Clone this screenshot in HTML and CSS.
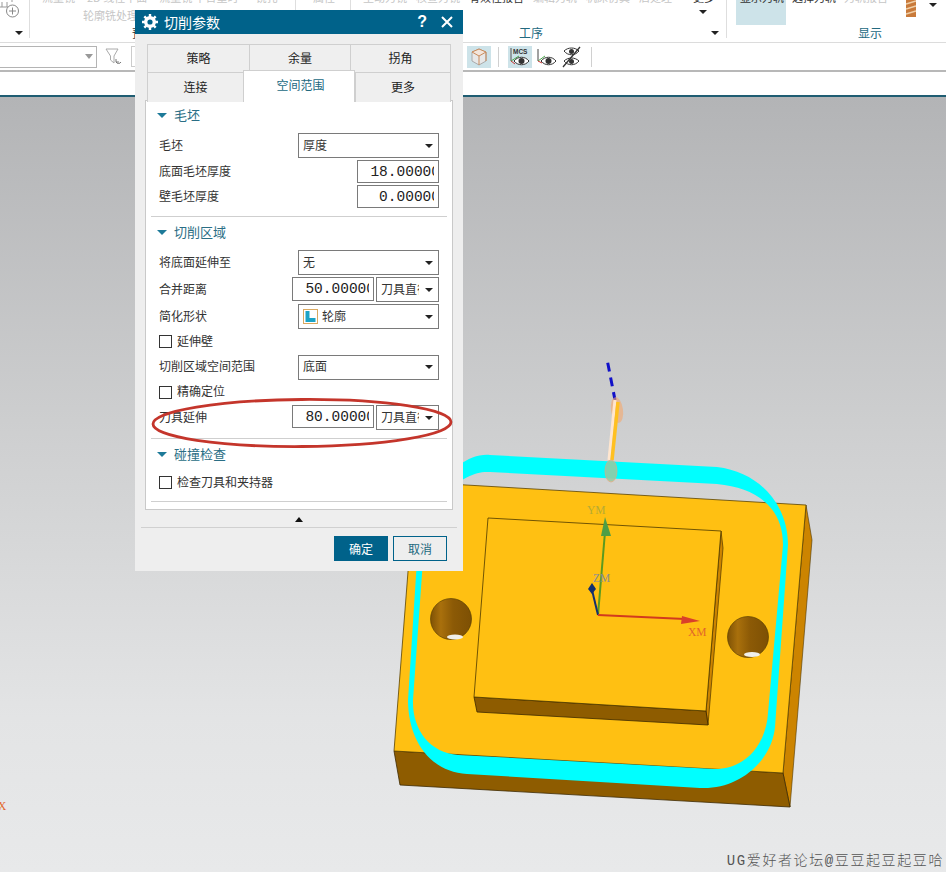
FILE: index.html
```html
<!DOCTYPE html>
<html lang="zh">
<head>
<meta charset="utf-8">
<title>切削参数</title>
<link rel="stylesheet" href="styles.css">
</head>
<body>
<div class="app">
  <header class="ribbon">
    <section class="g g1">
      <svg class="addicon" width="22" height="18" viewBox="0 0 22 18"><path d="M0 7h8M2 2v5M7 2v5M12 0v2" fill="none" stroke="#999"/><circle cx="12.5" cy="11" r="6" fill="#fff" stroke="#888"/><path d="M9 11h7M12.5 7.500v7" stroke="#888"/></svg>
      <i class="caret g1caret"></i>
    </section>
    <section class="g g2">
      <div class="rtop"><span>流量铣</span><span>2D 线性平面</span><span>流量铣 平台重时</span><span class="far">铣孔</span></div>
      <div class="rsub">轮廓铣处理器</div>
      <div class="glabel g2label">预</div>
    </section>
    <section class="g g3">
      <div class="rtop"><span>属性</span></div>
    </section>
    <section class="g g4">
      <div class="rtop"><span>主动力铣</span><span>核查力铣</span><span class="dark">有效性报告</span><span>编辑力轨</span><span>机床仿真</span><span>后处理</span><span class="dark more">更多</span></div>
      <i class="caret c4a"></i>
      <div class="glabel g4label">工序</div>
      <i class="caret c4b"></i>
    </section>
    <section class="g g5">
      <div class="hl"></div>
      <div class="rtop"><span class="dark">显示刀轨</span><span class="dark">选择刀轨</span><span>力轨报告</span></div>
      <svg class="drill" width="10" height="17" viewBox="0 0 10 17"><rect width="10" height="17" fill="#c97a3a"/><path d="M0 4l10-3M0 9l10-3M0 14l10-3" stroke="#f0d0a8" stroke-width="1.500"/></svg>
      <i class="caret c5"></i>
      <div class="glabel g5label">显示</div>
    </section>
  </header>

  <nav class="toolbar">
    <div class="combo"><i class="caret greycaret"></i></div>
    <svg class="filter" width="17" height="17" viewBox="0 0 17 17"><path d="M1 1h12L9 8v7L5.500 12V8z" fill="#fff" stroke="#aaa"/><path d="M16 14c-1 2-4 2-5 0M11 11v3h3" fill="none" stroke="#777"/></svg>
    <div class="mini"></div>
    <div class="tb-right">
      <div class="tbtn on"><svg width="18" height="18" viewBox="0 0 18 18"><path d="M9 1l7 3v9l-7 4-7-4V4z" fill="#e8e8e8" stroke="#aaa"/><path d="M9 1l7 3-7 4-7-4z" fill="#f3e6dc" stroke="#c98a5a"/><path d="M9 8v9M16 4v9" stroke="#c98a5a" fill="none"/></svg></div>
      <b class="tsep"></b>
      <div class="tbtn on mcs"><svg width="22" height="22" viewBox="0 0 22 22"><text x="4" y="8" class="mcs-t">MCS</text><path d="M2 2v13" stroke="#555"/><path d="M2 15l8-5" stroke="#4aa84a"/><path d="M2 15l4 3" stroke="#c33"/><path d="M5 15c4-5 11-5 15 0c-4 5-11 5-15 0z" fill="#fff" stroke="#333"/><circle cx="12.500" cy="15" r="3" fill="#333"/></svg></div>
      <div class="tbtn"><svg width="22" height="22" viewBox="0 0 22 22"><path d="M3 3v12" stroke="#444"/><path d="M3 15l7-5" stroke="#4aa84a"/><path d="M3 15l4 2" stroke="#c33"/><path d="M6 15c4-5 11-5 15 0c-4 5-11 5-15 0z" fill="#fff" stroke="#333"/><circle cx="13.500" cy="15" r="3" fill="#333"/></svg></div>
      <div class="tbtn"><svg width="22" height="22" viewBox="0 0 22 22"><path d="M3 5c4-4 11-4 15 0c-4 5-11 5-15 0z" fill="#fff" stroke="#333"/><circle cx="10.500" cy="5.500" r="2.500" fill="#333"/><path d="M3 15c4-4 11-4 15 0c-4 5-11 5-15 0z" fill="#fff" stroke="#333"/><circle cx="10.500" cy="15.500" r="2.500" fill="#333"/><path d="M2 21L19 1" stroke="#333" stroke-width="1.300"/></svg></div>
      <b class="tsep"></b>
    </div>
  </nav>

  <div class="gap"></div>

  <main class="viewport">
    <svg class="scene" viewBox="0 97 946 775" width="946" height="775">
      <defs>
        <linearGradient id="hole" x1="0" x2="1" y1="0" y2="0">
          <stop offset="0" stop-color="#7f5205"/><stop offset=".25" stop-color="#a9700c"/><stop offset=".55" stop-color="#8c5a06"/><stop offset="1" stop-color="#7d5004"/>
        </linearGradient>
      </defs>
      <path d="M806 505L812 540L790 807L783 773z" fill="#cc8400" stroke="#4d3500" stroke-width=".6"/>
      <path d="M394 751L783 773L790 807L400 785z" fill="#8e5c00" stroke="#3d2a00" stroke-width=".8"/>
      <path d="M415 482L806 505L783 773L394 751z" fill="#ffc012" stroke="#5a4300" stroke-width=".8"/>
      <path d="M721 531L723 548L708 725L706 711z" fill="#cc8400" stroke="#4d3500" stroke-width=".7"/>
      <path d="M474 697L706 711L708 725L477 712z" fill="#8e5c00" stroke="#3d2a00" stroke-width=".8"/>
      <path d="M488 518L721 531L706 711L474 697z" fill="#ffc012" stroke="#4d3900" stroke-width=".8"/>
      <g>
        <circle cx="451" cy="619" r="20.500" fill="url(#hole)" stroke="#4d3500" stroke-width=".6"/>
        <ellipse cx="455" cy="637" rx="8" ry="2.600" fill="#f0efea"/>
        <circle cx="748" cy="637" r="20.500" fill="url(#hole)" stroke="#4d3500" stroke-width=".6"/>
        <ellipse cx="752" cy="654.500" rx="8" ry="2.600" fill="#f0efea"/>
      </g>
      <path fill-rule="evenodd" fill="#00ffff" d="M417 560L408 700C408 740 430 772 467 774L700 788C740 790 772 760 775 727L788 545C788 505 760 472 717 467L490 455C470 453 450 470 430 490zM423 560L413 700C412 730 430 753 458 755L713 769C745 770 766 745 768 713L783 545C783 510 760 488 717 484L490 472C475 471 465 477 440 495z"/>
      <path d="M607.700 362.700L615 400" stroke="#1010c8" stroke-width="3" stroke-dasharray="9 6" fill="none"/>
      <ellipse cx="617" cy="410" rx="6" ry="13" fill="#f5a86e" opacity=".6" transform="rotate(-8 617 410)"/>
      <path d="M615 400L609 460" stroke="#ffe6cf" stroke-width="3"/>
      <path d="M618 402L612 460" stroke="#ffc020" stroke-width="3.500"/>
      <ellipse cx="611" cy="471" rx="6" ry="11" fill="#9ac8a0" stroke="#e8a878" stroke-width=".8" opacity=".85"/>
      <path d="M598 615L605 532" stroke="#5a9a20" stroke-width="2"/>
      <path d="M605 517L611 536L607 536L601 536z" fill="#4f9e45"/>
      <path d="M598 615L592 590" stroke="#14306e" stroke-width="2"/>
      <path d="M592 583L596 589L592 594L588 589z" fill="#14306e"/>
      <path d="M598 615L685 619" stroke="#d23a1e" stroke-width="2"/>
      <path d="M700 621L681 624L682 616z" fill="#d9402a"/>
      <text x="587" y="514" class="axis ym">YM</text>
      <text x="593" y="582" class="axis zm">ZM</text>
      <text x="688" y="636" class="axis xm">XM</text>
      <text x="-2" y="810" class="axis xm">X</text>
    </svg>
    <div class="wm">UG爱好者论坛@豆豆起豆起豆哈</div>
  </main>
</div>

<div class="dialog">
  <div class="dtitle">
    <svg class="gear" width="16" height="16" viewBox="0 0 16 16"><circle cx="8" cy="8" r="4.300" fill="none" stroke="#fff" stroke-width="3.400"/><path d="M8 0v3M8 13v3M0 8h3M13 8h3M2.300 2.300l2 2M11.700 11.700l2 2M13.700 2.300l-2 2M4.300 11.700l-2 2" stroke="#fff" stroke-width="2.400"/></svg>
    <span class="dname">切削参数</span>
    <span class="dq">?</span>
    <svg class="dx" width="12" height="12" viewBox="0 0 12 12"><path d="M1 1l10 10M11 1L1 11" stroke="#fff" stroke-width="2"/></svg>
  </div>
  <div class="dbody">
    <div class="tabs r1"><div class="tab">策略</div><div class="tab">余量</div><div class="tab">拐角</div></div>
    <div class="tabs r2"><div class="tab">连接</div><div class="tab active">空间范围</div><div class="tab">更多</div></div>
    <div class="panel">
      <div class="shead first"><i class="tri"></i>毛坯</div>
      <div class="rows">
        <div class="row"><label>毛坯</label><div class="sel w141"><span>厚度</span><i class="caret"></i></div></div>
        <div class="row"><label>底面毛坯厚度</label><div class="num w82"><div class="clip"><span>18.00000</span></div></div></div>
        <div class="row"><label>壁毛坯厚度</label><div class="num w82"><div class="clip"><span>0.00000</span></div></div></div>
      </div>
      <hr class="div">
      <div class="shead"><i class="tri"></i>切削区域</div>
      <div class="rows">
        <div class="row"><label>将底面延伸至</label><div class="sel w141"><span>无</span><i class="caret"></i></div></div>
        <div class="row"><label>合并距离</label><div class="pair"><div class="num w82 tall"><div class="clip"><span>50.00000</span></div></div><div class="sel w63"><span class="cut">刀具直径</span><i class="caret"></i></div></div></div>
        <div class="row"><label>简化形状</label><div class="sel w141"><svg class="lic" width="15" height="15" viewBox="0 0 15 15"><rect x=".5" y=".5" width="14" height="14" fill="#fff" stroke="#d9a860"/><path d="M2.500 2h4v7h6v4h-10z" fill="#1ba3c6"/></svg><span>轮廓</span><i class="caret"></i></div></div>
        <div class="row check"><b class="box"></b><label>延伸壁</label></div>
        <div class="row"><label>切削区域空间范围</label><div class="sel w141"><span>底面</span><i class="caret"></i></div></div>
        <div class="row check"><b class="box"></b><label>精确定位</label></div>
        <div class="row top"><label>刀具延伸</label><div class="pair"><div class="num w82"><div class="clip"><span>80.00000</span></div></div><div class="sel w63"><span class="cut">刀具直径</span><i class="caret"></i></div></div></div>
      </div>
      <hr class="div">
      <div class="shead"><i class="tri"></i>碰撞检查</div>
      <div class="rows">
        <div class="row check"><b class="box"></b><label>检查刀具和夹持器</label></div>
      </div>
      <hr class="div last">
    </div>
    <div class="collapse"><i class="uptri"></i></div>
  </div>
  <div class="dfoot"><button class="btn ok">确定</button><button class="btn cancel">取消</button></div>
</div>

<svg class="annot" width="310" height="56" viewBox="0 0 310 56"><ellipse cx="155" cy="28" rx="149" ry="23.500" fill="none" stroke="#c4352b" stroke-width="2.800" transform="rotate(-.4 155 28)"/></svg>
</body>
</html>
```
FILE: styles.css
```css
* { box-sizing: border-box; }
html, body { margin: 0; padding: 0; height: 100%; }
body { position: relative; width: 946px; height: 872px; overflow: hidden; background: #fff; font: 12px/14px "Noto Sans CJK SC", "Liberation Sans", sans-serif; color: #2a2a2a; }
.app { display: flex; flex-direction: column; width: 946px; height: 872px; }

.ribbon { display: flex; height: 43px; flex: none; border-bottom: 1px solid #dcdcdc; overflow: hidden; }
.g { position: relative; height: 38px; border-right: 1px solid #dedede; flex: none; }
.g1 { width: 30px; }
.g2 { width: 266px; padding-left: 12px; }
.g3 { width: 55px; padding-left: 17px; }
.g4 { width: 376px; padding-left: 12px; }
.g5 { width: 219px; border-right: 0; padding-left: 13px; }
.addicon { position: absolute; left: 0; top: 0; }
.rtop { position: relative; display: flex; gap: 9px; margin-top: -10px; color: #c6c6c6; white-space: nowrap; font-size: 11px; }
.rtop .dark { color: #333; }
.rtop .more { margin-left: 12px; }
.rtop .far { margin-left: 5px; }
.g2 .rtop { gap: 12px; }
.g5 .rtop { gap: 8px; }
.rsub { margin: 4px 0 0 41px; color: #c6c6c6; font-size: 11px; }
.glabel { position: absolute; top: 26px; line-height: 14px; color: #22697f; }
.g2label { left: 102px; color: #333; }
.g4label { left: 168px; }
.g5label { left: 131px; }
.caret { display: block; width: 0; height: 0; border: 4px solid transparent; border-top: 4px solid #222; border-bottom: 0; }
.g1caret { position: absolute; left: 15px; top: 31px; }
.c4a { position: absolute; left: 348px; top: 10px; }
.c4b { position: absolute; left: 360px; top: 31px; }
.c5 { position: absolute; left: 202px; top: 3px; }
.hl { position: absolute; left: 9px; top: 0; width: 50px; height: 25px; background: #cde3e9; }
.drill { position: absolute; left: 179px; top: 0; }

.toolbar { display: flex; align-items: center; height: 29px; flex: none; border-bottom: 2px solid #b8b8b8; position: relative; }
.combo { display: flex; align-items: center; justify-content: flex-end; width: 97px; height: 22px; border: 1px solid #b4b4b4; border-left: 0; padding-right: 3px; }
.greycaret { border-width: 5px 4px 0; border-top-color: #999; }
.filter { margin-left: 8px; }
.mini { width: 10px; height: 21px; margin-left: 9px; border: 1px solid #ccc; }
.tb-right { position: absolute; left: 467px; top: 3px; display: flex; align-items: center; height: 22px; gap: 2px; }
.tbtn { display: flex; align-items: center; justify-content: center; width: 24px; height: 22px; }
.tbtn.on { background: #cde3e9; }
.tbtn.mcs { margin-left: 7px; }
.tsep { display: block; width: 1px; height: 20px; background: #d0d0d0; margin-left: 5px; }
.mcs-t { font: bold 6.500px "Liberation Sans", sans-serif; fill: #333; }

.gap { flex: none; height: 23px; background: #fff; }
.viewport { position: relative; flex: 1; min-height: 0; border-top: 2px solid #1f5d72; background: linear-gradient(180deg, #b3b4b6 0%, #cfd0d1 45%, #e3e4e5 80%, #e8e9ea 100%); }
.scene { position: absolute; left: 0; top: 0; display: block; }
.axis { font: 11.500px "Liberation Serif", serif; }
.ym { fill: #b6ab34; }
.zm { fill: #8d8d90; }
.xm { fill: #e2662a; }
.wm { position: absolute; right: 2px; bottom: 2px; font: 14px/18px "Liberation Mono", "Noto Sans CJK SC", monospace; font-weight: 300; letter-spacing: 1.600px; color: #555; white-space: nowrap; }

.dialog { position: absolute; left: 135px; top: 10px; width: 328px; height: 561px; background: #eeeeee; display: flex; flex-direction: column; }
.dtitle { display: flex; align-items: center; height: 24px; flex: none; background: #00628a; color: #fff; padding: 0 10px 0 7px; }
.dname { margin-left: 6px; font-size: 14px; }
.gear { flex: none; }
.dq { margin-left: auto; font: bold 16px/16px "Liberation Sans", sans-serif; }
.dx { margin-left: 14px; }
.dbody { padding: 10px 10px 0; flex: none; height: 493px; }
.tabs { display: grid; margin: 0 2px; height: 28px; }
.r1 { grid-template-columns: 102px 101px 101px; }
.r2 { grid-template-columns: 96px 112px 96px; position: relative; z-index: 1; }
.tab { display: flex; align-items: center; justify-content: center; padding-bottom: 2px; background: #efefef; border: 1px solid #cfcfcf; border-bottom: 0; border-right: 0; color: #222; }
.tab:last-child { border-right: 1px solid #cfcfcf; }
.active { background: #fff; color: #22697f; height: 32px; margin-top: -2px; padding: 0 0 4px 3px; border: 1px solid #cfcfcf; border-bottom: 0; }
.panel { height: 410px; background: #fff; border: 1px solid #c9c9c9; padding: 0 13px; }
.shead { display: flex; align-items: center; height: 32px; padding-bottom: 2px; color: #2a6e85; font-size: 13px; }
.shead.first { height: 30px; }
.tri { width: 0; height: 0; margin-right: 7px; border: 5px solid transparent; border-top: 5px solid #1d7a99; border-bottom: 0; margin-left: -2px; }
.rows { display: flex; flex-direction: column; gap: 2px; margin-top: 1px; }
.shead.first + .rows { margin-top: 2px; }
.row { display: flex; align-items: center; justify-content: space-between; min-height: 23px; }
.row.top { align-items: flex-start; }
.row.top label { line-height: 23px; }
.row.check { justify-content: flex-start; min-height: 21.500px; height: 21.500px; }
.box { display: block; width: 13px; height: 13px; border: 1px solid #333; background: #fff; margin-right: 5px; }
label { color: #333; padding-bottom: 2px; }
.sel { display: flex; align-items: center; height: 25px; border: 1px solid #7a7a7a; background: #fff; padding: 0 5px 0 4px; color: #333; }
.sel span { margin-top: -2px; }
.sel .caret { margin-left: auto; flex: none; }
.w141 { width: 141px; }
.w63 { width: 63px; }
.cut { width: 38px; overflow: hidden; white-space: nowrap; }
.lic { margin-right: 4px; flex: none; }
.num { display: flex; align-items: center; height: 23px; border: 1px solid #7a7a7a; background: #fff; padding: 0 4px; color: #222; }
.num.tall { height: 24px; }
.w82 { width: 82px; }
.clip { width: 100%; overflow: hidden; text-align: right; white-space: nowrap; font: 14.500px/20px "Liberation Mono", monospace; }
.clip span { display: inline-block; margin-right: -6px; }
.pair { display: flex; gap: 2px; align-items: flex-start; }
.div { height: 1px; border: 0; background: #cfcfcf; margin: 8px -8px 0; }
.div.last { margin-top: 7.500px; }
.collapse { display: flex; justify-content: center; align-items: center; height: 16px; padding-top: 3px; }
.uptri { width: 0; height: 0; border: 4px solid transparent; border-bottom: 5px solid #111; border-top: 0; }
.dfoot { display: flex; justify-content: flex-end; gap: 5px; flex: 1; align-items: flex-start; margin: 0 6px; padding: 8px 10px 0 0; border-top: 1px solid #d0d0d0; }
.btn { width: 54px; height: 25px; padding: 0; font: 12px/14px "Noto Sans CJK SC", sans-serif; border: 1px solid #00628a; }
.ok { background: #00628a; color: #fff; }
.cancel { background: #eeeeee; color: #22697f; }

.annot { position: absolute; left: 147px; top: 395px; pointer-events: none; }
```
